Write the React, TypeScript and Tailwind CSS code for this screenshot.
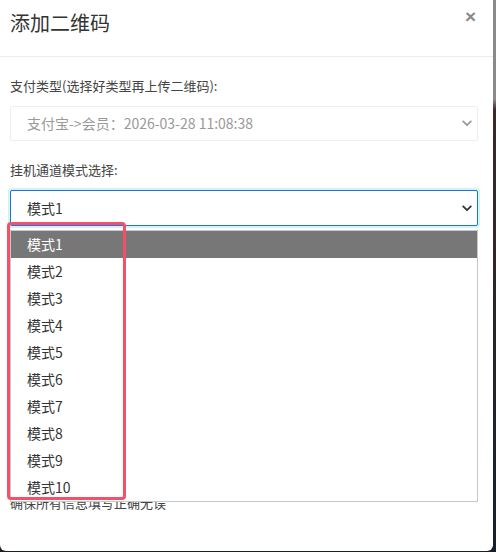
const modes = ["模式1", "模式2", "模式3", "模式4", "模式5", "模式6", "模式7", "模式8", "模式9", "模式10"];

function Chevron({ color }: { color: string }) {
  return (
    <svg width="10" height="7" viewBox="0 0 10 7" fill="none">
      <path d="M1.2 1.4 5 5.2 8.8 1.4" stroke={color} strokeWidth="1.8" strokeLinecap="round" strokeLinejoin="round" />
    </svg>
  );
}

export default function App() {
  return (
    <div
      className="flex h-[552px] w-[496px] bg-[#1c1f24]"
      style={{ fontFamily: '"Noto Sans CJK SC", "Microsoft YaHei", "Liberation Sans", sans-serif' }}
    >
      <div className="relative h-[551px] w-[493px] rounded-b-[6px] bg-white">
        <div className="relative h-[57px] border-b border-[#ececec] px-[10px] pt-[9px]">
          <h3 className="text-[20px] leading-[28px] font-normal text-[#333]">添加二维码</h3>
          <span
            className="absolute right-[17px] top-[4px] text-[19px] font-bold leading-[26px] text-[#8a8a8a]"
            style={{ fontFamily: '"Liberation Sans", Arial, sans-serif' }}
          >
            ×
          </span>
        </div>

        <div className="pl-[10px] pr-[15px] pt-[19px]">
          <label className="block text-[13px] leading-[20px] text-[#444]">支付类型(选择好类型再上传二维码):</label>
          <div className="mt-[10px] flex h-[35px] items-center justify-between rounded-[2px] border border-[#eeeeee] bg-white pl-[16px] pr-[5px]">
            <span className="text-[14px] text-[#999]">支付宝-&gt;会员：2026-03-28 11:08:38</span>
            <Chevron color="#9a9a9a" />
          </div>

          <label className="mt-[19px] block text-[13px] leading-[20px] text-[#444]">挂机通道模式选择:</label>
          <div className="mt-[10px] flex h-[36px] items-center justify-between rounded-[2px] border border-[#1a73e8] bg-white pl-[16px] pr-[5px] shadow-[0_0_0_2px_#d2f3ee]">
            <span className="text-[14px] text-[#333]">模式1</span>
            <Chevron color="#333" />
          </div>

          <p className="mt-[268px] text-[13px] leading-[18px] text-[#444]">确保所有信息填写正确无误</p>
        </div>

        <ul className="absolute left-[10px] top-[230px] w-[468px] border border-[#c8c8c8] bg-white">
          {modes.map((m, i) => (
            <li
              key={m}
              className={
                i === 0
                  ? "flex h-[27px] items-center bg-[#777] pl-[16px] text-[14px] text-white"
                  : "flex h-[27px] items-center pl-[16px] text-[14px] text-[#333]"
              }
            >
              {m}
            </li>
          ))}
        </ul>

        <div className="absolute left-[7px] top-[222px] h-[278px] w-[119px] rounded-[4px] border-[3px] border-[#f5506a]" />
      </div>
      <div className="flex-1 bg-gradient-to-b from-[#8a8a8a] from-[18%] via-[#3a2a2a] via-[20%] to-[#16202a]" />
    </div>
  );
}
